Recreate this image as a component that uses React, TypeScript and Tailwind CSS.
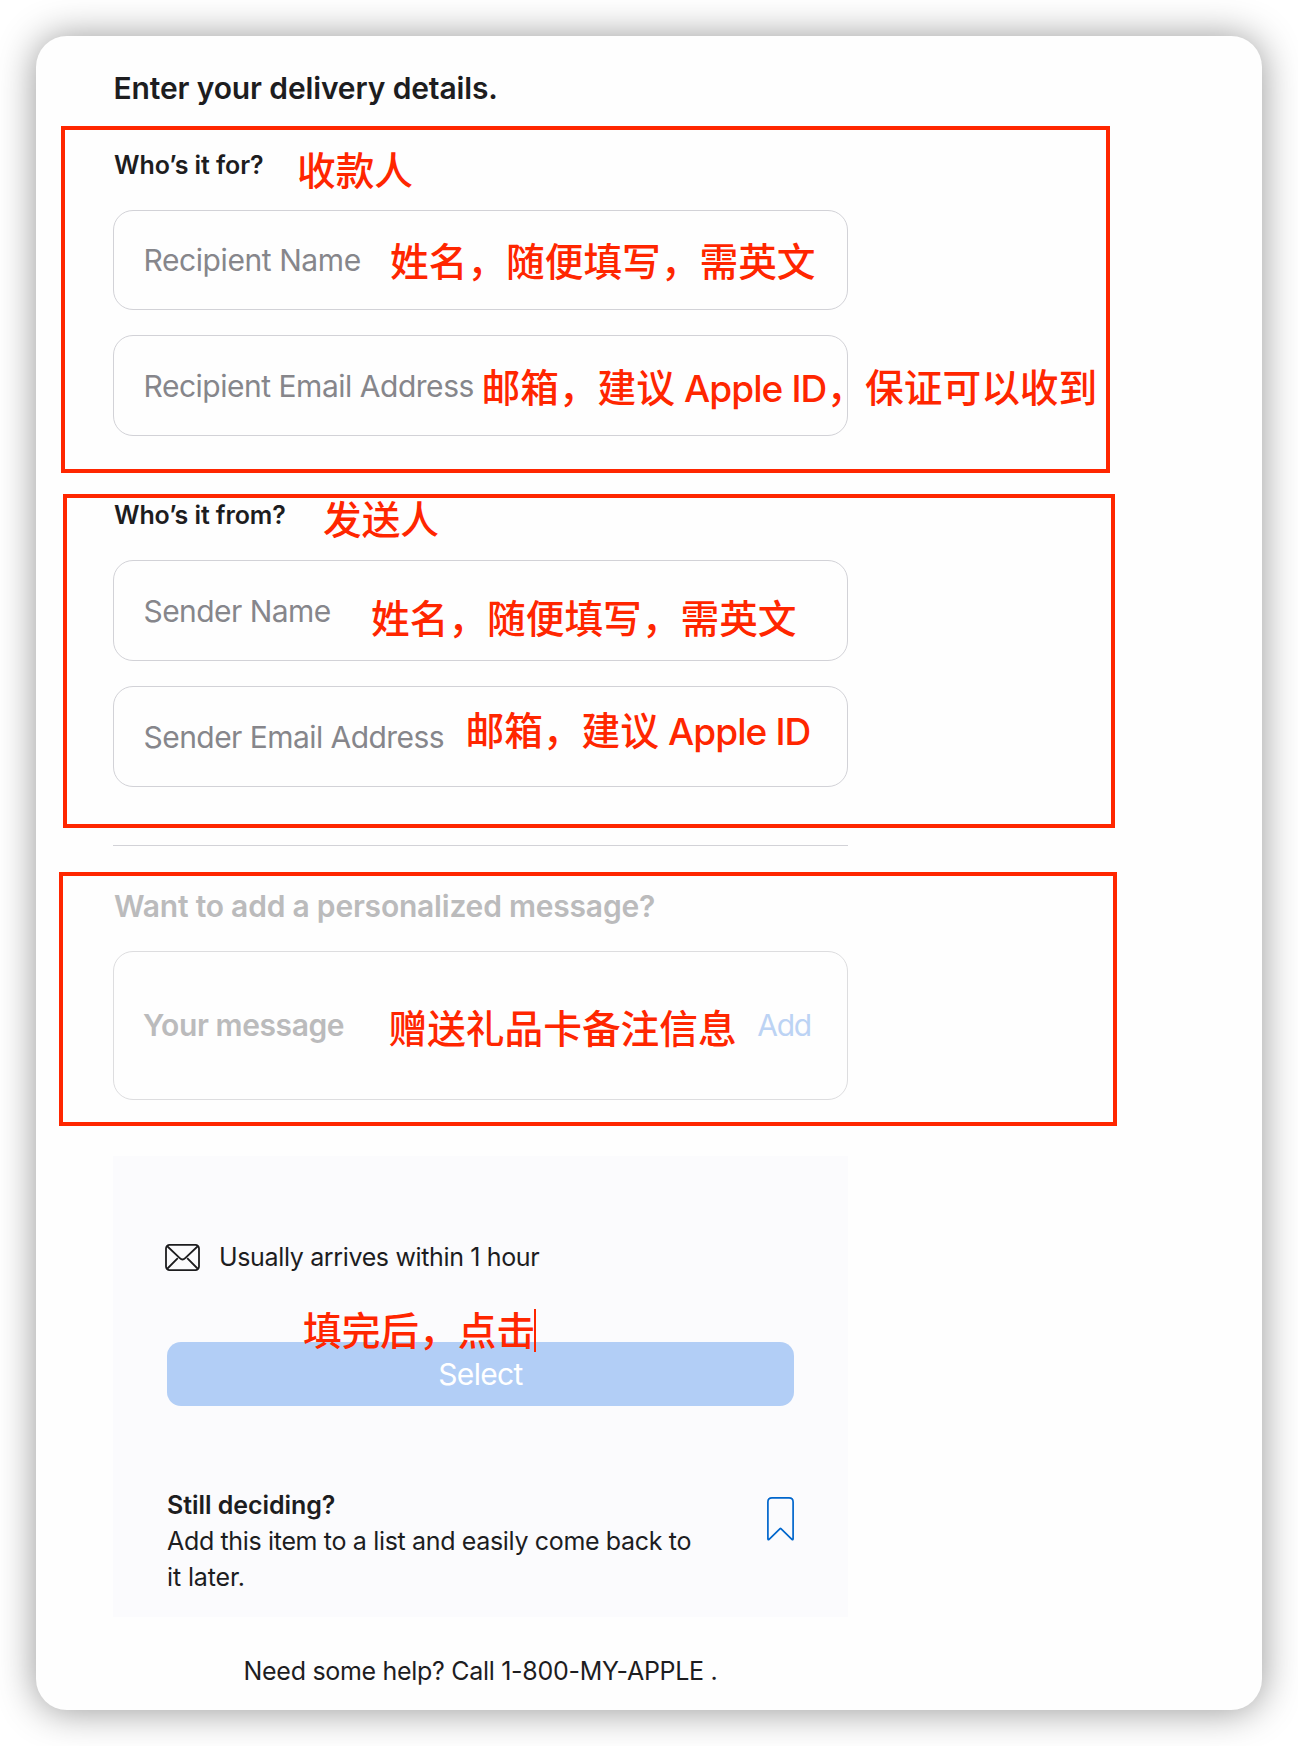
import type { ReactNode } from "react";

function Field({ label, className }: { label: string; className: string }) {
  return (
    <div className={`flex items-center rounded-[20px] border border-[#d2d2d7] pl-[29.5px] text-[30px] leading-9 text-[#86868b] ${className}`}>
      <span className="whitespace-nowrap">{label}</span>
    </div>
  );
}

/** Red hand-placed remark lying over the form. */
function Note({ className, children }: { className: string; children: ReactNode }) {
  return (
    <div className={`absolute whitespace-nowrap font-['Inter','Noto_Sans_CJK_SC',sans-serif] text-[38.7px] leading-[44px] font-medium text-[#ff2600] ${className}`}>
      {children}
    </div>
  );
}

function AppleId() {
  return <span className="text-[37px] tracking-[-0.9px]"> Apple ID</span>;
}

function Frame({ className }: { className: string }) {
  return <div className={`absolute border-4 border-[#ff2600] ${className}`} />;
}

function EnvelopeIcon() {
  return (
    <svg className="h-[27px] w-[35px] shrink-0" viewBox="0 0 35 27" fill="none" stroke="#1d1d1f" strokeWidth="1.8" strokeLinejoin="round">
      <rect x="1" y="0.9" width="33" height="25.2" rx="3.6" />
      <path d="M2 2 L14.8 14.2 Q17.5 16.8 20.2 14.2 L33 2" />
      <path d="M2 25 L12.8 14.2 M33 25 L22.2 14.2" />
    </svg>
  );
}

function BookmarkIcon() {
  return (
    <svg className="mt-[10px] h-[44px] w-[27px] shrink-0" viewBox="0 0 27 44" fill="none" stroke="#0066cc" strokeWidth="1.7" strokeLinejoin="round">
      <path d="M0.9 41.8 V5 Q0.9 0.9 5 0.9 H22 Q26.1 0.9 26.1 5 V41.8 Q26.1 43.4 24.9 42.3 L13.9 31.6 Q13.5 31.2 13.1 31.6 L2.1 42.3 Q0.9 43.4 0.9 41.8 Z" />
    </svg>
  );
}

export default function App() {
  return (
    <div className="relative h-[1746px] w-[1298px] overflow-hidden bg-white p-9 font-['Inter',sans-serif] text-[#1d1d1f]">
      <main className="h-[1674px] rounded-[31px] bg-[#fefefe] pt-[34px] pl-[77px] shadow-[0_1px_38px_rgba(0,0,0,0.42)]">
        <div className="flex w-[735px] flex-col">
          <h1 className="pl-[0.5px] text-[30px] leading-9 font-semibold tracking-[-0.13px]">Enter your delivery details.</h1>

          <h2 className="mt-[43px] pl-[1px] text-[25px] leading-8 font-semibold tracking-[-0.08px]">Who’s it for?</h2>
          <Field label="Recipient Name" className="mt-[29px] h-[100px] tracking-[-0.42px]" />
          <Field label="Recipient Email Address" className="mt-[25px] h-[101px] tracking-[-0.48px]" />

          <h2 className="mt-[63px] pl-[1px] text-[25px] leading-8 font-semibold tracking-[-0.1px]">Who’s it from?</h2>
          <Field label="Sender Name" className="mt-[29px] h-[101px] tracking-[-0.56px]" />
          <Field label="Sender Email Address" className="mt-[25px] h-[101px] tracking-[-0.55px]" />

          <hr className="mt-[58px] border-t border-[#d2d2d7]" />

          <h2 className="mt-[42px] pl-[1px] text-[30px] leading-9 font-semibold tracking-[-0.21px] text-[#bbbbbc]">Want to add a personalized message?</h2>
          <div className="mt-[27px] flex h-[149px] items-center justify-between rounded-[20px] border border-[#dddddf] pr-9 pb-px pl-[29px] text-[30px] leading-9">
            <span className="font-semibold tracking-[-0.4px] text-[#bbbbbc]">Your message</span>
            <span className="tracking-[-1.2px] text-[#bcd3f4]">Add</span>
          </div>

          <section className="mt-14 h-[461px] bg-[#fbfbfd] px-[54px] pt-[83px]">
            <div className="-ml-0.5 flex h-9 items-center text-[25px]">
              <EnvelopeIcon />
              <span className="ml-[19px] pt-0.5 tracking-[-0.35px]">Usually arrives within 1 hour</span>
            </div>
            <button className="mt-[67px] flex h-16 w-full items-center justify-center rounded-[14px] bg-[#b2cef6] text-[30px] tracking-[-0.67px] text-white">Select</button>
            <div className="mt-[81px] flex items-start justify-between text-[25px] leading-9">
              <div>
                <p className="font-semibold tracking-[-0.06px]">Still deciding?</p>
                <p className="tracking-[-0.34px]">
                  Add this item to a list and easily come back to
                  <br />
                  <span className="tracking-[-0.12px]">it later.</span>
                </p>
              </div>
              <BookmarkIcon />
            </div>
          </section>

          <p className="mt-9 text-center text-[25px] leading-9 tracking-[-0.3px]">Need some help? Call 1-800-MY-APPLE .</p>
        </div>
      </main>

      <Frame className="top-[126px] left-[61px] h-[347px] w-[1049px]" />
      <Frame className="top-[494px] left-[63px] h-[334px] w-[1052px]" />
      <Frame className="top-[872px] left-[59px] h-[254px] w-[1058px]" />

      <Note className="top-[149px] left-[297px]">收款人</Note>
      <Note className="top-[240px] left-[390px]">姓名，随便填写，需英文</Note>
      <Note className="top-[366px] left-[481.5px]">邮箱，建议<AppleId />，保证可以收到</Note>
      <Note className="top-[498px] left-[323px]">发送人</Note>
      <Note className="top-[597px] left-[371px]">姓名，随便填写，需英文</Note>
      <Note className="top-[709px] left-[465.5px]">邮箱，建议<AppleId /></Note>
      <Note className="top-[1007px] left-[388.5px]">赠送礼品卡备注信息</Note>
      <Note className="top-[1309px] left-[303px] flex">
        填完后，点击
        <span className="-ml-px h-[43px] w-0.5 bg-[#ff2600]" />
      </Note>
    </div>
  );
}
